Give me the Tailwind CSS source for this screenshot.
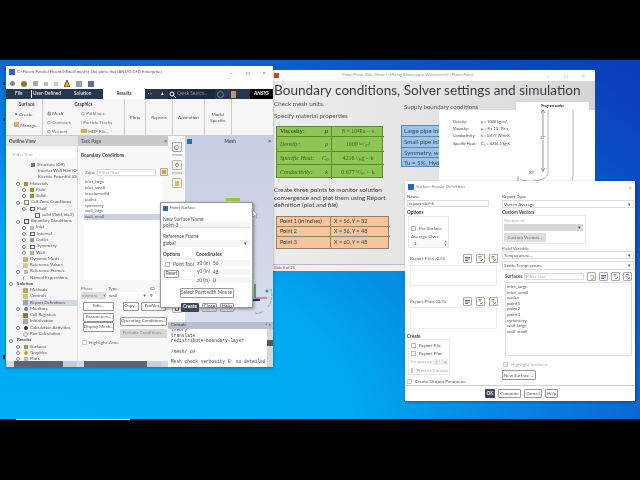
<!DOCTYPE html>
<html><head><meta charset="utf-8"><script src="https://cdn.jsdelivr.net/npm/@tailwindcss/browser@4"></script></head>
<body class="bg-black overflow-hidden">
<div class="w-[640px] h-[480px] flex flex-col bg-black font-['Lato',sans-serif] text-[#333] blur-[0.35px] overflow-hidden whitespace-nowrap">
<div class="h-[60px] bg-black shrink-0"></div>
<div class="relative h-[359px] shrink-0 bg-[radial-gradient(ellipse_at_5%_105%,#00b0f6_0%,#00a8f0_38%,#0a78da_62%,#0a4cc4_85%,#0a3cb8_100%)]">
<span class="absolute left-[3px] top-[22px] w-[2px] h-[3px] bg-[#223]"></span>
<span class="absolute left-[3px] top-[58px] w-[2px] h-[3px] bg-[#246]"></span>
<span class="absolute left-[3px] top-[295px] w-[2px] h-[4px] bg-[#111]"></span>

<!-- PowerPoint window -->
<div class="absolute left-[268px] top-[10px] w-[327px] h-[201px] flex flex-col bg-white">
 <div class="h-[11px] shrink-0 bg-white flex items-center pl-[6px] pr-[10px] text-[4.2px] text-[#999]">
  <span class="w-[5px] h-[5px] bg-[#c8452a] shrink-0"></span>
  <span class="flex-1 text-center pr-[10px]">PowerPoint Slide Show - [Mixing Elbow.pptx [Autosaved]] - PowerPoint</span>
  <span class="flex gap-[14px] text-[6px] text-[#aaa]"><span>–</span><span>□</span><span>×</span></span>
 </div>
 <div class="flex-1 bg-[linear-gradient(100deg,#eeeeee_0%,#e4e4e4_50%,#d2d2d2_100%)] pl-[6px] flex flex-col">
  <div class="h-[16px] mt-[1px] text-[13.6px] leading-[16px] text-[#3c3c3c]">Boundary conditions, Solver settings and simulation</div>
  <div class="flex">
   <div class="w-[124px] shrink-0 text-[6.3px] text-[#555] flex flex-col">
    <div class="h-[12px] leading-[12px]">Check mesh units.</div>
    <div class="h-[12px] leading-[12px]">Specify material properties</div>
    <div class="mt-[4px] ml-[2px] w-[107px] h-[52px] grid grid-cols-[55px_52px] grid-rows-[10px_15px_13px_14px] bg-[#8dc653] border border-[#5a8a33] text-[#3c5a20] text-[6px] font-['Liberation_Serif',serif]">
     <div class="border-b border-r border-[#5a8a33] flex justify-between items-center px-[3px] font-bold"><span>Viscosity:</span><i>μ</i></div>
     <div class="border-b border-[#5a8a33] flex items-center justify-center">8 × 10⁴Pa − s</div>
     <div class="border-b border-r border-[#5a8a33] flex justify-between items-center px-[3px] italic"><span>Density:</span><i>ρ</i></div>
     <div class="border-b border-[#5a8a33] flex items-center justify-center">1000 ᵏᵍ/ₘ³</div>
     <div class="border-b border-r border-[#5a8a33] flex justify-between items-center px-[3px] italic"><span>Specific Heat:</span><i>Cₚ</i></div>
     <div class="border-b border-[#5a8a33] flex items-center justify-center">4216 ᴶ/ₖg − k</div>
     <div class="border-r border-[#5a8a33] flex justify-between items-center px-[3px] italic"><span>Conductivity:</span><i>k</i></div>
     <div class="flex items-center justify-center">0.677 ᵂ/ₘ − k</div>
    </div>
    <div class="mt-[8px] w-[114px] leading-[7.5px] text-[#444] whitespace-normal">Create three points to monitor solution convergence and plot them using Report definition (plot and file)</div>
    <div class="mt-[7px] ml-[2px] w-[113px] h-[33px] grid grid-cols-[54px_59px] grid-rows-3 bg-[#f7c49b] border border-[#97806c] text-[5.4px] text-[#444]">
     <div class="border-b border-r border-[#97806c] flex items-center px-[3px]">Point 1 (in inches)</div><div class="border-b border-[#97806c] flex items-center px-[3px]">X = 56, Y = 32</div>
     <div class="border-b border-r border-[#97806c] flex items-center px-[3px]">Point 2</div><div class="border-b border-[#97806c] flex items-center px-[3px]">X = 56, Y = 48</div>
     <div class="border-r border-[#97806c] flex items-center px-[3px]">Point 3</div><div class="flex items-center px-[3px]">X = 60, Y = 48</div>
    </div>
   </div>
   <div class="flex flex-col text-[6.1px] text-[#555] pl-[6px]">
    <div class="h-[12px] mt-[3px] leading-[12px]">Supply boundary conditions</div>
    <div class="mt-[12px] -ml-[3px] w-[50px] h-[42px] bg-[#9dc3e6] border border-[#5b86b0] flex flex-col text-[#2a4a6a] overflow-hidden">
     <div class="h-[11px] border-b border-[#5b86b0] px-[2px] leading-[10px]">Large pipe inlet</div>
     <div class="h-[12px] border-b border-[#5b86b0] px-[2px] leading-[10px]">Small pipe inlet</div>
     <div class="h-[10px] border-b border-[#5b86b0] px-[2px] leading-[9px]">Symmetry, wall</div>
     <div class="flex-1 px-[2px] leading-[9px]">Tu = 5%, Hydraulic</div>
    </div>
   </div>
  </div>
 </div>
 <div class="h-[7px] shrink-0 bg-[#f0f0f0] border-t border-[#bbb] pl-[6px] text-[3.8px] leading-[6px] text-[#666]">Slide 6 of 25</div>
 <!-- pipe figure -->
 <div class="absolute left-[248px] top-[32px] w-[73px] h-[8px] bg-white text-[3.4px] text-center font-bold text-[#222] leading-[8px]">Program outlet</div>
 <div class="absolute left-[171px] top-[40px] w-[156px] h-[90px] bg-white text-[#444] text-[3.8px]">
  <div class="ml-[14px] mt-[9px] grid grid-cols-[28px_auto] w-[80px] gap-y-[1.6px] leading-[5.6px]">
   <span>Density:</span><span>ρ = 1000 kg/m³</span>
   <span>Viscosity:</span><span>μ = 8 x 10⁻⁴ Pa·s</span>
   <span>Conductivity:</span><span>k = 0.677 W/m·K</span>
   <span>Specific Heat:</span><span>Cₚ = 4216 J/kg·K</span>
  </div>
  <svg class="absolute left-[70px] top-0" width="86" height="90" fill="none" stroke="#888" stroke-width="0.6">
   <path d="M34 0V62" stroke="#555"/><path d="M32 3l2-3 2 3M32 58l2 3 2-3" stroke="#555"/>
   <path d="M39 0V62C39 68 30 72 24 70"/><path d="M64 0V66C64 80 52 85 40 90"/>
   <path d="M12 70L24 72L18 90M16 70L28 86"/>
   <path d="M9 66V90" stroke="#555"/>
  </svg>
  <span class="absolute left-[101px] top-[26px] bg-white text-[3.6px] leading-[4px]">32"</span>
  <span class="absolute left-[90px] top-[61px] text-[3.2px] leading-[4px]">90°</span>
 </div>
</div>

<!-- Fluent window -->
<div class="absolute left-[6px] top-[6px] w-[267px] h-[301px] flex flex-col bg-white shadow-[0_1px_3px_#0005] z-10 text-[4.6px]">
 <div class="h-[12px] shrink-0 flex items-center pl-[3px] pr-[7px] text-[4.2px] text-[#555]">
  <span class="w-[6px] h-[6px] bg-[#2a68c0] shrink-0 mr-[2px]"></span><span class="flex-1">C:\Fluent Parallel Fluent\Mixed\mesh\t (3d, pbns, rke) [ANSYS CFD Enterprise]</span>
  <span class="flex gap-[13px] text-[6px] text-[#666]"><span>–</span><span>□</span><span>×</span></span>
 </div>
 <div class="h-[11px] shrink-0 flex items-center gap-[6px] pl-[4px]">
  <span class="w-[5px] h-[5px] rounded-full bg-[#888]"></span><span class="w-[6px] h-[6px] rounded-full bg-[#8a7a30]"></span><span class="w-[5px] h-[5px] bg-[#aaa]"></span><span class="w-[4px] h-[4px] bg-[#bbb]"></span><span class="w-[4px] h-[4px] bg-[#ccc]"></span>
  <svg width="6" height="7"><path d="M3 0L6 7H0Z" fill="#e8b010" stroke="#222" stroke-width="0.7"/></svg>
  <span class="w-[6px] h-[6px] bg-[#8aa]"></span><span class="w-[6px] h-[6px] bg-[#66a]"></span>
 </div>
 <div class="h-[10px] shrink-0 bg-[#26364f] flex items-center text-[#d5d9e2] text-[4.7px] font-bold relative">
  <span class="ml-[9px] w-[16px]">File</span>
  <span class="w-[43px] border-l border-white pl-[1px]">User-Defined</span>
  <span class="w-[29px]">Solution</span>
  <span class="w-[42px] h-full bg-white text-[#444] flex items-center justify-center">Results</span>
  <span class="ml-[3px] w-[13px] text-[#ccd]">· ·</span>
  <span class="w-[6px] text-white">▴</span>
  <span class="ml-[1px] w-[47px] h-full bg-[#1a2a3f] flex items-center font-normal text-[#8a93a5]"><svg width="7" height="7" class="mx-[1px]" fill="none" stroke="#fff"><circle cx="3" cy="3" r="2"/><path d="M4.5 4.5L6.5 6.5"/></svg>Quick Search...</span>
  <span class="w-[7px] h-[7px] rounded-full border border-[#778] ml-[2px]"></span>
  <span class="ml-[7px] w-[5px] h-[7px] bg-[#b99d58]"></span>
  <span class="absolute right-0 top-0 h-full w-[23px] bg-black text-white italic text-[5px] flex items-center justify-center">ANSYS</span>
 </div>
 <div class="h-[37px] shrink-0 flex bg-[#f6f6f6] border-b border-[#ccc] text-[4.6px] text-[#555]">
  <div class="w-[37px] border-r border-[#ccc] flex flex-col pl-[8px] pt-[2px] gap-[2px]"><b class="h-[7px] text-[#444] pl-[5px]">Surface</b><span class="h-[7px] mt-[1px]">✦ Create</span><span class="h-[7px] mt-[2px]"><span class="inline-block w-[5px] h-[5px] bg-[#d8b070]"></span> Manage...</span></div>
  <div class="w-[82px] border-r border-[#ccc] flex flex-col pt-[2px]"><b class="h-[7px] text-[#444] text-center">Graphics</b>
   <div class="grid grid-cols-[34px_48px] pl-[4px] grid-rows-[9px_9px_9px] mt-[2px] text-[#777]">
    <span class="text-[#555]">◍ Mesh</span><span>⛭ Pathlines</span>
    <span>⛭ Contours</span><span>⁞ Particle Tracks</span>
    <span>⛭ Vectors</span><span class="text-[#555]"><span class="inline-block w-[6px] h-[4px] bg-[#e8a93a]"></span> HDF File...</span>
   </div></div>
  <div class="w-[21px] border-r border-[#ccc] flex items-center justify-center">Plots</div>
  <div class="w-[27px] border-r border-[#ccc] flex items-center justify-center">Reports</div>
  <div class="w-[32px] border-r border-[#ccc] flex items-center justify-center">Animation</div>
  <div class="w-[27px] border-r border-[#ccc] flex items-center justify-center text-center leading-[6.5px]">Model<br>Specific</div>
 </div>
 <div class="flex-1 flex min-h-0">
  <!-- Outline -->
  <div class="w-[71px] shrink-0 flex flex-col bg-[#f7f7f7]">
   <div class="h-[10px] bg-[#e4e4e4] font-bold pl-[3px] leading-[10px] text-[#555]">Outline View</div>
   <div class="h-[8px] mt-[4px] mx-[2px] bg-white pl-[5px] leading-[8px] text-[#aaa]">Filter Text</div>
   <div class="flex-1 pt-[4px] flex flex-col text-[4.4px] text-[#555] overflow-hidden">
    <div class="h-[6.27px] flex items-center pl-[25px] gap-[2px]"><i class="w-[4px] h-[4px] bg-[#777]"></i>Structure (Off)</div>
    <div class="h-[6.27px] flex items-center pl-[30px] gap-[2px]"><i class="w-[4px] h-[4px] bg-[#bba]"></i>Interior Wall Film (Off)</div>
    <div class="h-[6.27px] flex items-center pl-[30px] gap-[2px]"><i class="w-[4px] h-[4px] bg-[#998]"></i>Electric Potential (Off)</div>
    <div class="h-[6.27px] flex items-center pl-[10px] gap-[2px]"><i class="w-[4px] h-[4px] rounded-full border-[0.5px] border-[#888] mr-[2px]"></i><i class="w-[4px] h-[4px] bg-[#a88a40]"></i>Materials</div>
    <div class="h-[6.27px] flex items-center pl-[16px] gap-[2px]"><i class="w-[4px] h-[4px] rounded-full border-[0.5px] border-[#888] mr-[2px]"></i><i class="w-[4px] h-[4px] bg-[#a88a40]"></i>Fluid</div>
    <div class="h-[6.27px] flex items-center pl-[16px] gap-[2px]"><i class="w-[4px] h-[4px] rounded-full border-[0.5px] border-[#888] mr-[2px]"></i><i class="w-[4px] h-[4px] bg-[#a88a40]"></i>Solid</div>
    <div class="h-[6.27px] flex items-center pl-[10px] gap-[2px]"><i class="w-[4px] h-[4px] rounded-full border-[0.5px] border-[#888] mr-[2px]"></i><i class="w-[5px] h-[5px] border border-[#887]"></i>Cell Zone Conditions</div>
    <div class="h-[6.27px] flex items-center pl-[16px] gap-[2px]"><i class="w-[4px] h-[4px] rounded-full border-[0.5px] border-[#888] mr-[2px]"></i><i class="w-[5px] h-[4px] border border-[#667]"></i>Fluid</div>
    <div class="h-[6.27px] flex items-center pl-[29px] gap-[2px]"><i class="w-[5px] h-[5px] border border-[#667]"></i>solid (fluid, id=2)</div>
    <div class="h-[6.27px] flex items-center pl-[10px] gap-[2px]"><i class="w-[4px] h-[4px] rounded-full border-[0.5px] border-[#888] mr-[2px]"></i><i class="w-[5px] h-[5px] border border-[#554]"></i>Boundary Conditions</div>
    <div class="h-[6.27px] flex items-center pl-[16px] gap-[2px]"><i class="w-[4px] h-[4px] rounded-full border-[0.5px] border-[#888] mr-[2px]"></i><i class="w-[4px] h-[4px] bg-[#bbb]"></i>Inlet</div>
    <div class="h-[6.27px] flex items-center pl-[16px] gap-[2px]"><i class="w-[4px] h-[4px] rounded-full border-[0.5px] border-[#888] mr-[2px]"></i><i class="w-[5px] h-[4px] border border-[#667]"></i>Internal</div>
    <div class="h-[6.27px] flex items-center pl-[16px] gap-[2px]"><i class="w-[4px] h-[4px] rounded-full border-[0.5px] border-[#888] mr-[2px]"></i><i class="w-[4px] h-[4px] bg-[#999]"></i>Outlet</div>
    <div class="h-[6.27px] flex items-center pl-[16px] gap-[2px]"><i class="w-[4px] h-[4px] rounded-full border-[0.5px] border-[#888] mr-[2px]"></i><i class="w-[5px] h-[4px] border border-[#667]"></i>Symmetry</div>
    <div class="h-[6.27px] flex items-center pl-[16px] gap-[2px]"><i class="w-[4px] h-[4px] rounded-full border-[0.5px] border-[#888] mr-[2px]"></i><i class="w-[4px] h-[4px] bg-[#ccb070]"></i>Wall</div>
    <div class="h-[6.27px] flex items-center pl-[17px] gap-[2px]"><i class="w-[5px] h-[5px] bg-[#c8b080]"></i>Dynamic Mesh</div>
    <div class="h-[6.27px] flex items-center pl-[17px] gap-[2px]"><i class="w-[5px] h-[5px] bg-[#d8c898]"></i>Reference Values</div>
    <div class="h-[6.27px] flex items-center pl-[10px] gap-[2px]"><i class="w-[4px] h-[4px] rounded-full border-[0.5px] border-[#888] mr-[2px]"></i><i class="w-[4px] h-[4px] bg-[#bbb]"></i>Reference Frames</div>
    <div class="h-[6.27px] flex items-center pl-[17px] gap-[2px]"><i class="w-[5px] h-[5px] text-[5px] leading-[5px] font-['Liberation_Serif',serif]">f</i>Named Expressions</div>
    <div class="h-[6.27px] flex items-center pl-[3px] gap-[2px] font-bold text-[#444]"><i class="w-[4px] h-[4px] rounded-full border-[0.5px] border-[#888] mr-[2px]"></i>Solution</div>
    <div class="h-[6.27px] flex items-center pl-[17px] gap-[2px]"><i class="w-[5px] h-[5px] bg-[#b8a878]"></i>Methods</div>
    <div class="h-[6.27px] flex items-center pl-[17px] gap-[2px]"><i class="w-[5px] h-[5px] bg-[#d8c070]"></i>Controls</div>
    <div class="h-[6.27px] flex items-center gap-[2px] bg-[#d4d8e4] ml-[17px]"><i class="w-[5px] h-[5px] bg-[#9aa4c0]"></i>Report Definitions</div>
    <div class="h-[6.27px] flex items-center pl-[10px] gap-[2px]"><i class="w-[4px] h-[4px] rounded-full border-[0.5px] border-[#888] mr-[2px]"></i><i class="w-[4px] h-[4px] rounded-full bg-[#778]"></i>Monitors</div>
    <div class="h-[6.27px] flex items-center pl-[17px] gap-[2px]"><i class="w-[5px] h-[5px] bg-[#8a7a40]"></i>Cell Registers</div>
    <div class="h-[6.27px] flex items-center pl-[17px] gap-[2px]"><i class="w-[5px] h-[5px] bg-[#a8a8b8]"></i>Initialization</div>
    <div class="h-[6.27px] flex items-center pl-[10px] gap-[2px]"><i class="w-[4px] h-[4px] rounded-full border-[0.5px] border-[#888] mr-[2px]"></i><i class="w-[4px] h-[4px] rounded-full bg-[#333]"></i>Calculation Activities</div>
    <div class="h-[6.27px] flex items-center pl-[17px] gap-[2px]"><i class="w-[5px] h-[5px] rounded-full border border-[#aaa]"></i>Run Calculation</div>
    <div class="h-[6.27px] flex items-center pl-[3px] gap-[2px] font-bold text-[#444]"><i class="w-[4px] h-[4px] rounded-full border-[0.5px] border-[#888] mr-[2px]"></i>Results</div>
    <div class="h-[6.27px] flex items-center pl-[10px] gap-[2px]"><i class="w-[4px] h-[4px] rounded-full border-[0.5px] border-[#888] mr-[2px]"></i><i class="w-[4px] h-[4px] bg-[#b89040]"></i>Surfaces</div>
    <div class="h-[6.27px] flex items-center pl-[10px] gap-[2px]"><i class="w-[4px] h-[4px] rounded-full border-[0.5px] border-[#888] mr-[2px]"></i><i class="w-[4px] h-[4px] rounded-full bg-[#c8a030]"></i>Graphics</div>
    <div class="h-[6.27px] flex items-center pl-[10px] gap-[2px]"><i class="w-[4px] h-[4px] rounded-full border-[0.5px] border-[#888] mr-[2px]"></i><i class="w-[4px] h-[4px] bg-[#bbb]"></i>Plots</div>
   </div>
   <div class="h-[6px] shrink-0 flex bg-[#c8ccd8] pl-[1px]"><span class="w-[7px] bg-[#d4d8e0]"></span><span class="w-[49px] bg-[#5f6475]"></span></div>
  </div>
  <!-- Task page -->
  <div class="w-[91px] shrink-0 flex flex-col bg-[#f8f8f8] border-l border-[#e0e0e0]">
   <div class="h-[10px] bg-[#c9c9cc] pl-[3px] leading-[10px] font-bold text-[#666] flex justify-between pr-[1px]"><span>Task Page</span><span class="text-[#555]">×</span></div>
   <div class="h-[8px] mt-[5px] pl-[3px] font-bold leading-[8px] text-[#444]">Boundary Conditions</div>
   <div class="h-[8px] mt-[9px] flex items-center gap-[1px] pl-[7px] text-[#666]">Zone<span class="w-[59px] h-[7px] bg-white border border-[#ddd] pl-[1px] leading-[5px] text-[#aaa] ml-[1px]">Filter Text</span><span class="ml-[3px] w-[8px] h-[8px] border border-[#aaa] rounded-[1px] bg-[#fff8e0] flex items-center justify-center"><span class="w-[4px] h-[4px] bg-[#c8a030]"></span></span></div>
   <div class="mt-[2px] mx-[6px] h-[102px] bg-white text-[4.3px] text-[#555] pt-[1px] flex flex-col">
    <div class="h-[5.9px] leading-[5.9px] pl-[1px]">inlet_large</div><div class="h-[5.9px] leading-[5.9px] pl-[1px]">inlet_small</div><div class="h-[5.9px] leading-[5.9px] pl-[1px]">interior-solid</div><div class="h-[5.9px] leading-[5.9px] pl-[1px]">outlet</div><div class="h-[5.9px] leading-[5.9px] pl-[1px]">symmetry</div><div class="h-[5.9px] leading-[5.9px] pl-[1px]">wall_large</div><div class="h-[5.9px] leading-[5.9px] pl-[1px] bg-[#cdd2e0]">wall_small</div>
   </div>
   <div class="mt-[5px] grid grid-cols-[27px_42px_auto] pl-[3px] h-[6px] leading-[6px] text-[#777]"><span>Phase</span><span class="text-[#555]">Type</span><span class="text-[#555]">ID</span></div>
   <div class="mt-[1px] grid grid-cols-[27px_42px_auto] pl-[3px] h-[7px] leading-[7px]"><span class="w-[25px] bg-[#ddd] text-[#888] flex justify-between px-[1px]">mixture<i>▾</i></span><span class="w-[38px] bg-white text-[#555] flex justify-between px-[1px]">wall<i>▾</i></span><span class="bg-white">9</span></div>
   <div class="flex mt-[3px] text-[#555] text-[4.5px]">
    <div class="w-[40px] pl-[5px] flex flex-col">
     <span class="h-[9px] w-[31px] border border-[#999] rounded-[1px] bg-white flex items-center justify-center">Edit...</span>
     <span class="h-[9px] w-[31px] mt-[2px] border border-[#999] rounded-[1px] bg-white flex items-center justify-center">Parameters...</span>
     <span class="h-[10px] w-[31px] border border-[#999] rounded-[1px] bg-white flex items-center justify-center">Display Mesh...</span>
    </div>
    <div class="flex-1 flex flex-col pl-[2px]">
     <div class="flex gap-[2px] pl-[3px]"><span class="h-[9px] w-[16px] border border-[#999] rounded-[1px] bg-white flex items-center justify-center">Copy...</span><span class="h-[9px] w-[25px] border border-[#999] rounded-[1px] bg-white flex items-center justify-center">Profiles...</span></div>
     <span class="h-[9px] mt-[6px] w-[47px] border border-[#999] rounded-[1px] bg-white flex items-center justify-center">Operating Conditions...</span>
     <span class="h-[9px] mt-[3px] w-[47px] rounded-[1px] bg-[#d8d8d8] text-[#888] flex items-center justify-center">Periodic Conditions...</span>
    </div>
   </div>
   <div class="h-[7px] mt-[1px] flex items-center gap-[2px] pl-[4px] text-[#666]"><i class="w-[5px] h-[5px] border border-[#ccc] bg-white"></i>Highlight Zone</div>
   <div class="mt-auto h-[6px] shrink-0 flex bg-[#c8ccd8]"><span class="w-[6px] bg-[#d4d8e0]"></span><span class="w-[63px] bg-[#5f6475]"></span><span class="ml-auto w-[7px] bg-[#d4d8e0]"></span></div>
  </div>
  <!-- right block: graphics + console -->
  <div class="flex-1 flex flex-col min-w-0">
   <div class="h-[186px] shrink-0 flex">
    <div class="w-[17px] shrink-0 bg-[#fafafa] flex flex-col items-center pt-[6px] text-[#888]">
     <span class="w-[10px] h-[10px] border border-[#aaa] rounded-[1px] bg-[#f4f4f4] flex items-center justify-center"><span class="w-[5px] h-[5px] rounded-full border border-[#99a]"></span></span>
     <span class="mt-[2px] w-[10px] h-[2px] border border-[#ccc]"></span>
     <span class="mt-[4px] w-[10px] h-[10px] border border-[#bbb] bg-[#f4f4f4] rounded-[1px] flex items-center justify-center"><span class="w-[4px] h-[4px] rounded-full border border-[#a89040]"></span></span>
     <span class="mt-[2px] w-[10px] h-[2px] border border-[#ccc]"></span>
     <span class="mt-[4px] w-[10px] h-[10px] border border-[#bbb] bg-[#f4f4f4] rounded-[1px] flex items-center justify-center"><span class="w-[4px] h-[5px] bg-[#d8c050]"></span></span>
     <span class="mt-[116px] w-[10px] h-[9px] border border-[#bbb] bg-[#f4f4f4] rounded-[1px] flex items-center justify-center"><span class="w-[4px] h-[5px] border border-[#666]"></span></span>
    </div>
    <div class="flex-1 bg-[linear-gradient(#c6cde4,#dadeec)] relative">
     <div class="h-[10px] flex items-center justify-between px-[2px] font-bold text-[#555]"><span class="w-[5px] h-[5px] bg-[#2a68c0]"></span><span>Mesh</span><span class="text-[#333]">×</span></div>
     <span class="absolute left-[41px] top-[62px] w-[14px] h-[3px] bg-[#8cc850]"></span>
     <svg class="absolute left-[65px] top-[148px]" width="23" height="38" fill="none">
      <path d="M5 0V14" stroke="#3aa040" stroke-width="1.6"/><path d="M3 16h7" stroke="#1a2a80" stroke-width="2"/><path d="M5 14h12" stroke="#d03030" stroke-width="1"/>
      <circle cx="17" cy="7" r="1.5" fill="#10a0a0"/><path d="M21 5c2 8 0 14-3 18M5 29c3 1 6 0 8-2" stroke="#aaa" stroke-width="1.2" stroke-dasharray="3 1"/>
     </svg>
    </div>
   </div>
   <div class="flex-1 flex flex-col bg-white">
    <div class="h-[7px] shrink-0 bg-[#b9bdcc] flex justify-between items-center pl-[3px] pr-[2px] text-[4.4px] text-[#444]"><span>Console</span><span>▫ ×</span></div>
    <div class="flex-1 flex min-h-0">
     <div class="flex-1 font-['Liberation_Mono',monospace] text-[4.5px] text-[#444] pl-[3px] leading-[5.2px] overflow-hidden">
      <div class="h-[4px] overflow-hidden"><div class="-mt-[2px]">theory</div></div>
      <div class="h-[5.2px]">translate</div>
      <div class="h-[5.2px]">redistribute-boundary-layer</div>
      <div class="h-[5.2px]"> </div>
      <div class="h-[5.2px]">/mesh/ ov</div>
      <div class="h-[5.2px]"> </div>
      <div class="h-[5.2px]">Mesh check verbosity 0: no detailed</div>
     </div>
     <div class="w-[6px] shrink-0 bg-[#d8d8d8] flex flex-col items-center"><span class="mt-[11px] w-full h-[6px] bg-[#555]"></span></div>
    </div>
   </div>
  </div>
 </div>
 <!-- Point Surface dialog -->
 <div class="absolute left-[154px] top-[136px] w-[93px] h-[106px] bg-white border border-[#999] shadow-[1px_1px_3px_#0006] flex flex-col px-[1px] text-[4.8px] text-[#555] z-20">
  <div class="h-[11px] shrink-0 flex items-center gap-[2px] pl-[1px] text-[4.4px]"><i class="w-[5px] h-[5px] bg-[#2a68c0]"></i>Point Surface</div>
  <div class="h-[6px] mt-[2px] leading-[6px] pl-[1px]">New Surface Name</div>
  <div class="h-[6px] bg-[#f6f6f6] border-b border-[#ddd] leading-[6px] pl-[1px] mr-[1px]">point-3</div>
  <div class="h-[6px] mt-[5px] leading-[6px] pl-[1px]">Reference Frame</div>
  <div class="h-[7px] mt-[1px] bg-[#f6f6f6] flex justify-between leading-[7px] pl-[1px] pr-[3px] mr-[1px]"><span>global</span><span>▾</span></div>
  <div class="flex mt-[4px]">
   <div class="w-[33px] flex flex-col shrink-0">
    <b class="h-[6px] leading-[6px] pl-[1px] text-[#444]">Options</b>
    <div class="h-[22px] mt-[1px] border border-[#eee] pl-[1px]">
     <div class="h-[9px] flex items-center gap-[3px] pl-[1px] mt-[1px]"><i class="w-[5px] h-[5px] border border-[#bbb] shrink-0"></i>Point Tool</div>
     <span class="h-[8px] w-[15px] border border-[#999] rounded-[1px] flex items-center justify-center mt-[1px]">Reset</span>
    </div>
   </div>
   <div class="flex-1 flex flex-col pl-[1px]">
    <b class="h-[6px] leading-[6px] text-[#444]">Coordinates</b>
    <div class="h-[8.5px] mt-[2px] flex items-center gap-[1px] pl-[1px]"><span class="w-[14px] shrink-0">x0 (in)</span><span class="flex-1 h-[6px] mr-[1px] bg-[#f6f6f6] leading-[6px] pl-[1px]">56</span></div>
    <div class="h-[8.5px] flex items-center gap-[1px] pl-[1px]"><span class="w-[14px] shrink-0">y0 (in)</span><span class="flex-1 h-[6px] mr-[1px] bg-[#f6f6f6] leading-[6px] pl-[1px]">48</span></div>
    <div class="h-[8.5px] flex items-center gap-[1px] pl-[1px]"><span class="w-[14px] shrink-0">z0 (in)</span><span class="flex-1 h-[6px] mr-[1px] bg-[#f6f6f6] leading-[6px] pl-[1px]">0</span></div>
   </div>
  </div>
  <div class="flex justify-center mt-[3px]"><span class="h-[10px] w-[54px] border border-[#999] rounded-[1px] flex items-center justify-center">Select Point with Mouse</span></div>
  <div class="h-[1px] bg-[#ccc] mt-[2px]"></div>
  <div class="flex gap-[3px] pl-[19px] mt-[3px]"><span class="h-[9px] w-[18px] bg-[#3f4658] text-white rounded-[1px] flex items-center justify-center font-bold">Create</span><span class="h-[9px] w-[15px] border border-[#999] rounded-[1px] flex items-center justify-center">Close</span><span class="h-[9px] w-[14px] border border-[#999] rounded-[1px] flex items-center justify-center">Help</span></div>
 </div>
</div>

<!-- cursor -->
<svg class="absolute left-[252px] top-[150px] z-30" width="6" height="9"><path d="M1 0V7L2.5 5.5L4 8L5 7.5L3.5 5H5.5Z" fill="#fff" stroke="#555" stroke-width="0.5"/></svg>

<!-- Surface Report Definition -->
<div class="absolute left-[405px] top-[121px] w-[230px] h-[220px] bg-white shadow-[1px_1px_3px_#0005] z-20 flex flex-col text-[4.6px] text-[#555]">
 <div class="h-[12px] shrink-0 flex items-center gap-[2px] pl-[3px] pr-[3px] text-[4.4px] text-[#888]"><i class="w-[6px] h-[6px] bg-[#2a68c0]"></i><span class="flex-1">Surface Report Definition</span><span class="text-[6px]">×</span></div>
 <div class="flex h-[192px] shrink-0">
  <div class="w-[96px] shrink-0 flex flex-col pl-[2px]">
   <div class="h-[6px] leading-[6px]">Name</div>
   <div class="h-[7px] mt-[1px] w-[82px] border border-[#ddd] leading-[5px] pl-[1px]">report-def-6</div>
   <b class="h-[6px] mt-[2px] leading-[6px] text-[#444]">Options</b>
   <div class="h-[33px] mt-[1px] ml-[1px] w-[41px] border border-[#e8e8e8] flex flex-col pl-[2px]">
    <div class="h-[7px] mt-[8px] flex items-center gap-[3px]"><i class="w-[5px] h-[5px] border border-[#bbb]"></i>Per Surface</div>
    <div class="h-[6px] mt-[1px] leading-[6px]">Average Over</div>
    <div class="h-[7px] mt-[1px] w-[37px] bg-[#f8f8f8] flex justify-between pl-[3px] pr-[1px] leading-[7px]"><span>1</span><span class="text-[3px] leading-[3.5px]">▴<br>▾</span></div>
   </div>
   <div class="flex items-center h-[9px] mt-[6px] pl-[3px] text-[#666]"><span class="w-[53px]">Report Files [0/0]</span>
    <span class="flex gap-[4px]"><span class="w-[9px] h-[9px] border border-[#aaa] rounded-[1px] flex items-center justify-center"><svg width="5" height="4" stroke="#555" stroke-width="0.8"><path d="M0 .5h5M0 2h5M0 3.5h3"/></svg></span><span class="w-[9px] h-[9px] border border-[#aaa] rounded-[1px] flex items-center justify-center"><svg width="6" height="6" fill="none"><path d="M.5.5h3M.5 2h3" stroke="#666" stroke-width=".7"/><path d="M2 4l1 1 2-2" stroke="#b09020"/></svg></span><span class="w-[9px] h-[9px] border border-[#aaa] rounded-[1px] flex items-center justify-center"><svg width="6" height="6" fill="none"><path d="M.5.5h3M.5 2h3" stroke="#666" stroke-width=".7"/><path d="M2.5 3l2.5 2.5M5 3L2.5 5.5" stroke="#b09020"/></svg></span></span>
   </div>
   <div class="h-[22px] mt-[2px] ml-[3px] w-[87px] border border-[#eee]"></div>
   <div class="flex items-center h-[9px] mt-[11px] pl-[3px] text-[#666]"><span class="w-[53px]">Report Plots [0/0]</span>
    <span class="flex gap-[4px]"><span class="w-[9px] h-[9px] border border-[#aaa] rounded-[1px] flex items-center justify-center"><svg width="5" height="4" stroke="#555" stroke-width="0.8"><path d="M0 .5h5M0 2h5M0 3.5h3"/></svg></span><span class="w-[9px] h-[9px] border border-[#aaa] rounded-[1px] flex items-center justify-center"><svg width="6" height="6" fill="none"><path d="M.5.5h3M.5 2h3" stroke="#666" stroke-width=".7"/><path d="M2 4l1 1 2-2" stroke="#b09020"/></svg></span><span class="w-[9px] h-[9px] border border-[#aaa] rounded-[1px] flex items-center justify-center"><svg width="6" height="6" fill="none"><path d="M.5.5h3M.5 2h3" stroke="#666" stroke-width=".7"/><path d="M2.5 3l2.5 2.5M5 3L2.5 5.5" stroke="#b09020"/></svg></span></span>
   </div>
   <div class="h-[23px] mt-[1px] ml-[3px] w-[87px] border border-[#eee]"></div>
   <b class="h-[6px] mt-[4px] leading-[6px] text-[#444]">Create</b>
   <div class="h-[36px] ml-[1px] w-[42px] border border-[#e8e8e8] flex flex-col pl-[2px]">
    <div class="h-[8px] flex items-center gap-[3px] mt-[1px]"><i class="w-[5px] h-[5px] border border-[#bbb]"></i>Report File</div>
    <div class="h-[8px] flex items-center gap-[3px]"><i class="w-[5px] h-[5px] border border-[#bbb]"></i>Report Plot</div>
    <div class="h-[9px] flex items-center gap-[1px] text-[#aaa]">Frequency<span class="flex-1 h-[6px] mr-[1px] bg-[#eee] flex justify-between pl-[2px] pr-[1px] leading-[6px]"><span>1</span><span>▾</span></span></div>
    <div class="h-[8px] flex items-center gap-[3px] text-[#aaa]"><i class="w-[5px] h-[5px] border border-[#ccc] bg-[#eee]"></i>Print to Console</div>
   </div>
   <div class="h-[8px] mt-[2px] flex items-center gap-[3px]"><i class="w-[5px] h-[5px] border border-[#ccc]"></i>Create Output Parameter</div>
  </div>
  <div class="flex-1 flex flex-col pl-[1px] pr-[1px]">
   <div class="h-[6px] leading-[6px]">Report Type</div>
   <div class="h-[8px] mt-[1px] border border-[#ddd] flex justify-between leading-[6px] pl-[1px] pr-[2px]"><span>Vertex Average</span><span>▾</span></div>
   <b class="h-[6px] mt-[1px] leading-[6px] text-[#444]">Custom Vectors</b>
   <div class="h-[29px] w-[84px] border border-[#e8e8e8] pl-[1px] flex flex-col text-[#aaa]">
    <div class="h-[6px] mt-[1px] leading-[6px]">Vectors of</div>
    <div class="h-[7px] mt-[1px] w-[79px] bg-[#d8d8d8] flex justify-end pr-[2px] leading-[7px] text-[#555]">▾</div>
    <span class="mt-[2px] h-[9px] w-[42px] rounded-[1px] bg-[#ddd] text-[#777] flex items-center justify-center">Custom Vectors...</span>
   </div>
   <div class="h-[6px] mt-[1px] leading-[6px]">Field Variable</div>
   <div class="h-[8px] border border-[#ddd] flex justify-between leading-[6px] pl-[1px] pr-[2px]"><span>Temperature...</span><span>▾</span></div>
   <div class="h-[9px] mt-[2px] border border-[#ddd] flex justify-between leading-[7px] pl-[1px] pr-[2px]"><span>Static Temperature</span><span>▾</span></div>
   <div class="h-[9px] mt-[2px] flex items-center pl-[3px] gap-[1px]"><b class="w-[18px] text-[#555]">Surfaces</b><span class="w-[60px] h-[7px] border border-[#ddd] pl-[1px] leading-[5px] text-[#aaa]">Filter Text</span>
    <span class="flex gap-[3px] ml-[2px]"><span class="w-[9px] h-[9px] border border-[#aaa] rounded-[1px] flex items-center justify-center"><svg width="6" height="6" fill="none" stroke="#a09030" stroke-width=".8"><path d="M1 3a2 2 0 1 1 1 2"/></svg></span><span class="w-[9px] h-[9px] border border-[#aaa] rounded-[1px] flex items-center justify-center"><svg width="5" height="4" stroke="#555" stroke-width="0.8"><path d="M0 .5h5M0 2h5M0 3.5h3"/></svg></span><span class="w-[9px] h-[9px] border border-[#aaa] rounded-[1px] flex items-center justify-center"><svg width="6" height="6" fill="none"><path d="M.5.5h3M.5 2h3" stroke="#666" stroke-width=".7"/><path d="M2 4l1 1 2-2" stroke="#b09020"/></svg></span><span class="w-[9px] h-[9px] border border-[#aaa] rounded-[1px] flex items-center justify-center"><svg width="6" height="6" fill="none"><path d="M.5.5h3M.5 2h3" stroke="#666" stroke-width=".7"/><path d="M2.5 3l2.5 2.5M5 3L2.5 5.5" stroke="#b09020"/></svg></span></span>
   </div>
   <div class="h-[74px] mt-[1px] ml-[3px] w-[127px] border border-[#ddd] pl-[1px] pt-[1px] text-[#555] leading-[5.6px] flex flex-col">
    <span>inlet_large</span><span>inlet_small</span><span>outlet</span><span>point1</span><span>point2</span><span>point3</span><span>symmetry</span><span>wall_large</span><span>wall_small</span>
   </div>
   <div class="h-[7px] mt-[5px] flex items-center gap-[3px] pl-[1px] text-[#aaa]"><i class="w-[5px] h-[5px] border border-[#ccc] bg-[#eee]"></i>Highlight Surfaces</div>
   <span class="h-[10px] mt-[2px] w-[34px] border border-[#999] rounded-[1px] flex items-center justify-center">New Surface ⌄</span>
  </div>
 </div>
 <div class="h-[1px] bg-[#ccc] mx-[1px]"></div>
 <div class="flex gap-[3px] pl-[80px] mt-[3px]"><span class="h-[9px] w-[10px] bg-[#3f4658] text-white rounded-[1px] flex items-center justify-center font-bold">OK</span><span class="h-[9px] w-[23px] border border-[#999] rounded-[1px] flex items-center justify-center">Compute</span><span class="h-[9px] w-[18px] border border-[#999] rounded-[1px] flex items-center justify-center">Cancel</span><span class="h-[9px] w-[13px] border border-[#999] rounded-[1px] flex items-center justify-center">Help</span></div>
</div>
</div>
<div class="flex-1 bg-black"><div class="ml-[16px] w-[114px] h-[1px] bg-[#bfe0f2]"></div></div>
</div>
</body></html>
